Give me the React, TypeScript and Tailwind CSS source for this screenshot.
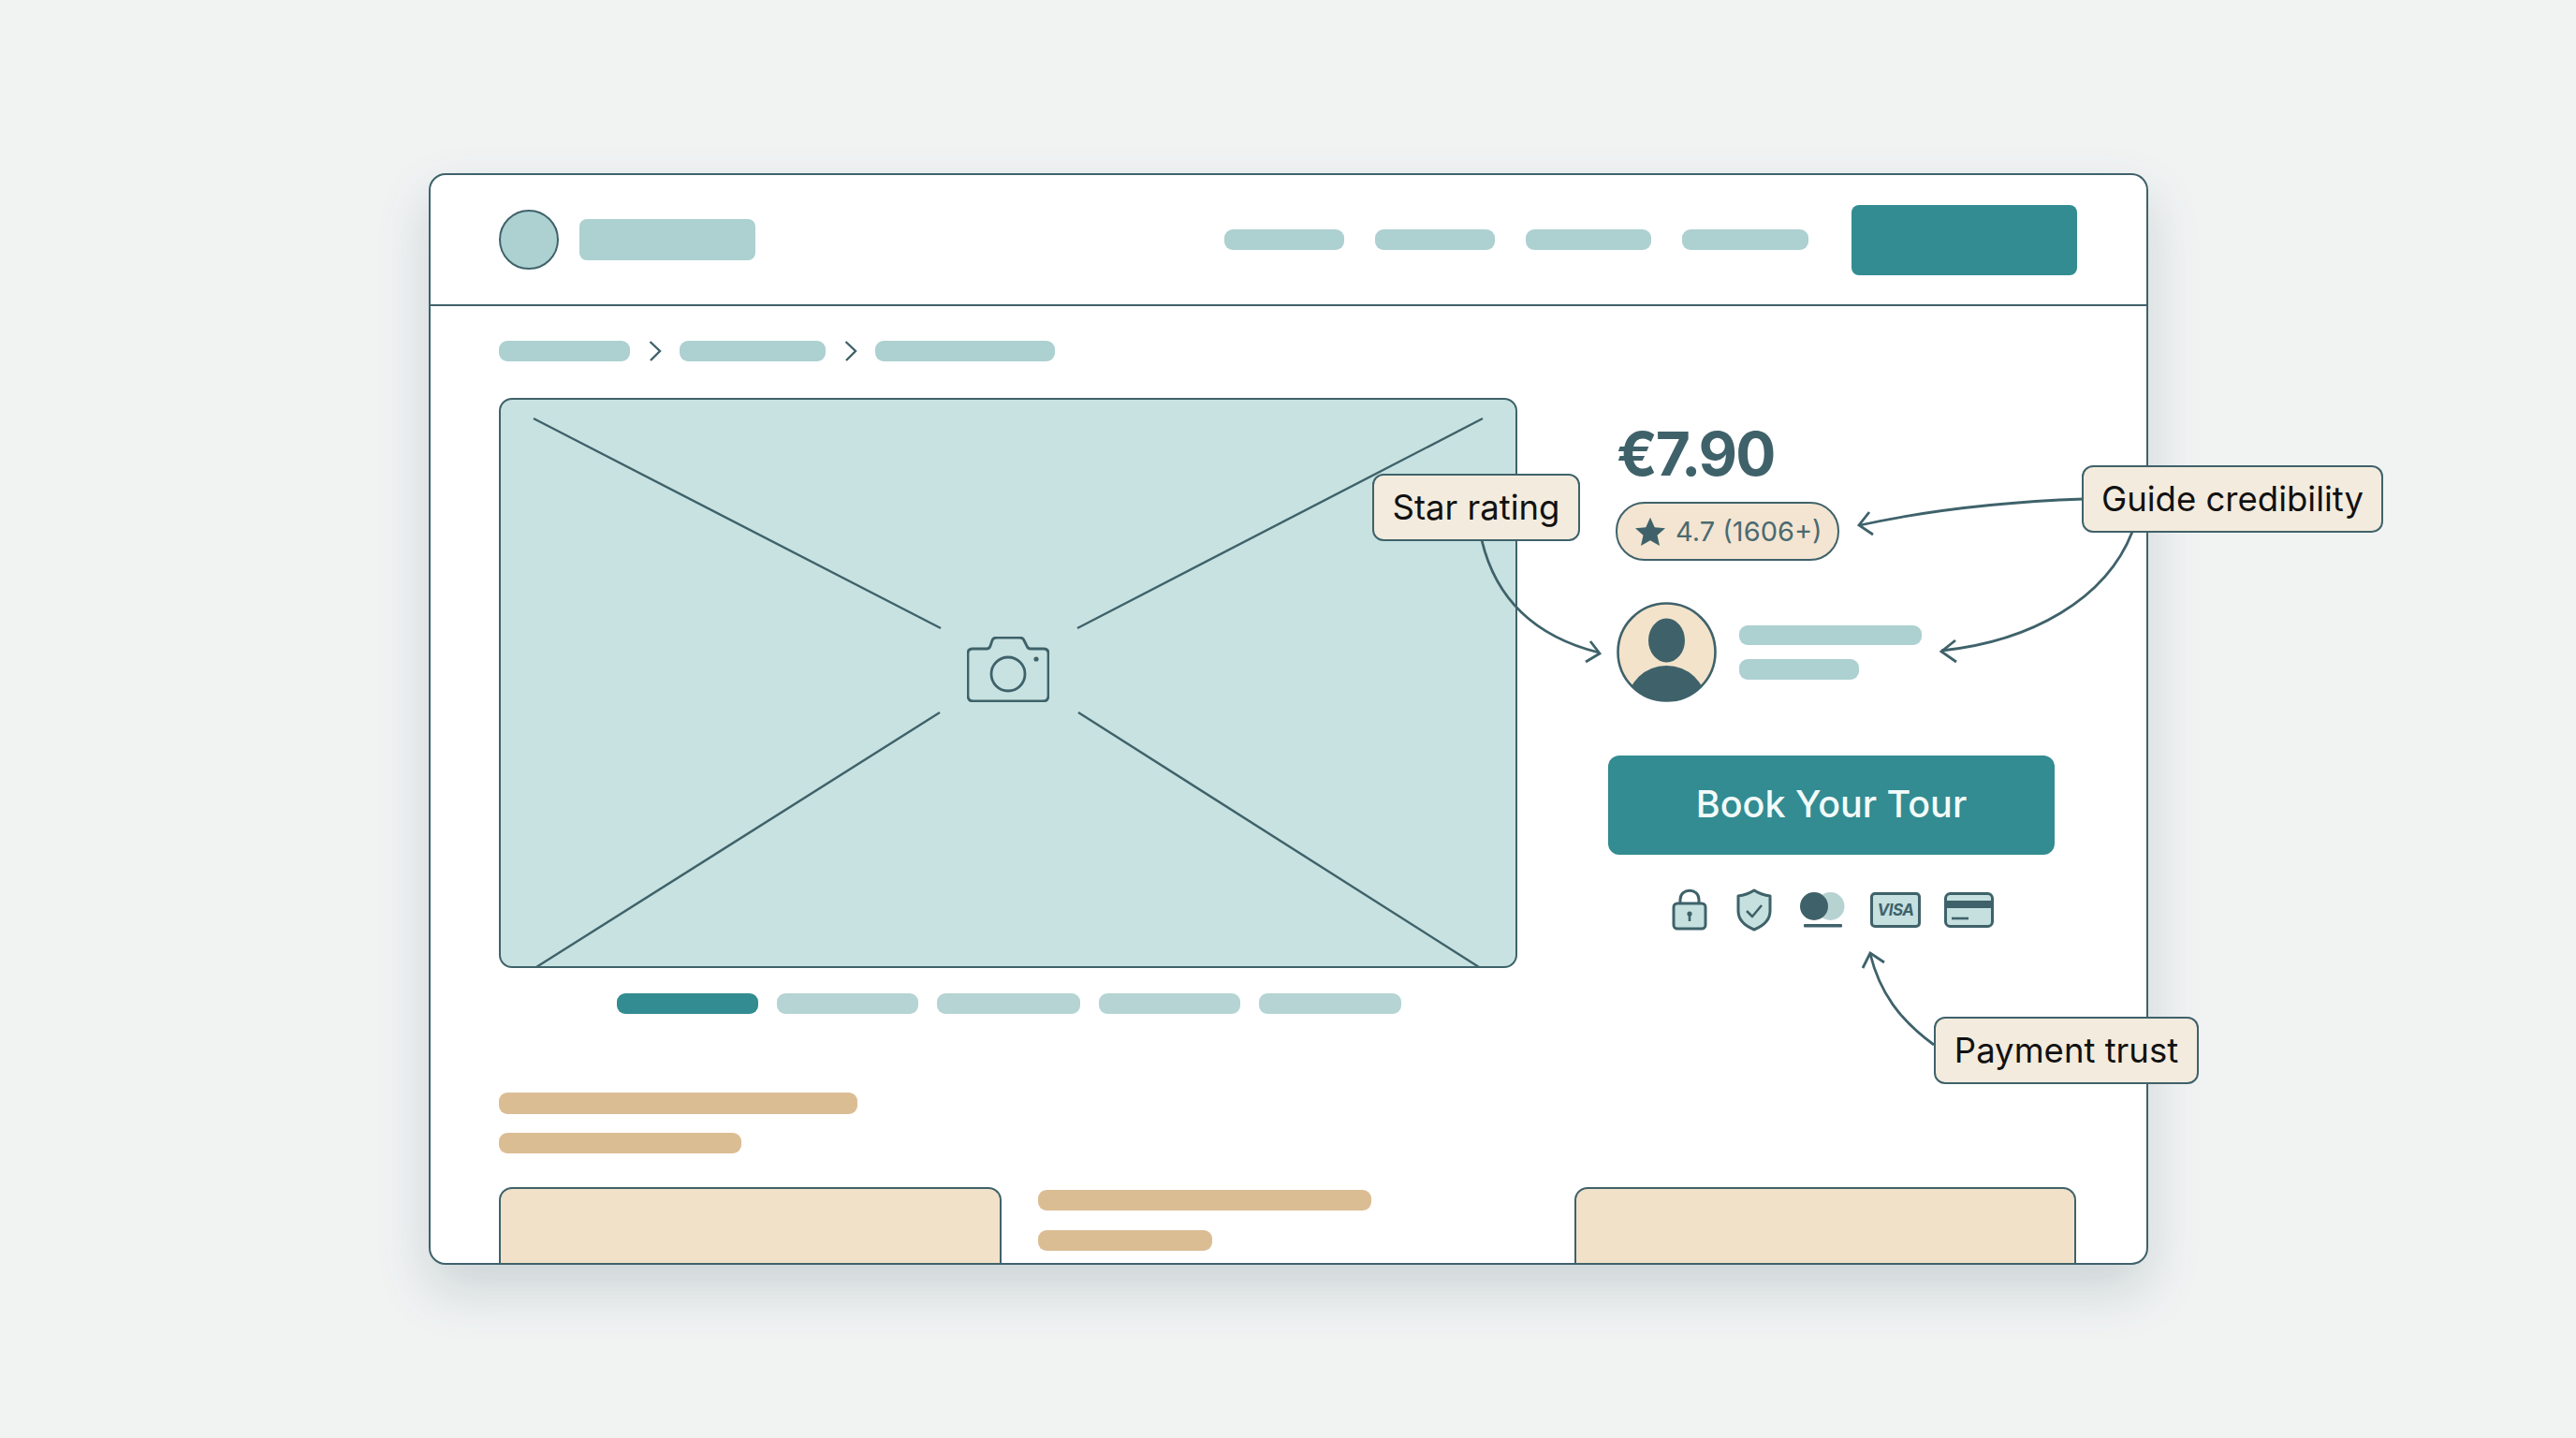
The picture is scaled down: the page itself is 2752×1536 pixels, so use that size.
const Bar = ({ className }: { className: string }) => <div className={`rounded-[9px] ${className}`} />;

const Chevron = () => (
  <svg width="14" height="22" viewBox="0 0 14 22" fill="none" stroke="#3f626a" strokeWidth="2.4">
    <path d="M1.5 1 L12 11 L2 21" />
  </svg>
);

const Camera = () => (
  <svg width="88" height="70" viewBox="0 0 88 70" fill="none" stroke="#3f626a" strokeWidth="2.8" strokeLinejoin="round">
    <path d="M6 13 H21 Q24 13 25 10 L27 4 Q28 1 32 1 H56 Q60 1 61 4 L64 10 Q65 13 68 13 H82 Q87 13 87 18 V63 Q87 69 81 69 H7 Q1 69 1 63 V18 Q1 13 6 13 Z" />
    <circle cx="44" cy="40" r="18" />
    <circle cx="74" cy="24" r="2.6" fill="#3f626a" stroke="none" />
  </svg>
);

const Avatar = () => (
  <svg width="107" height="107" viewBox="0 0 107 107" className="block">
    <defs>
      <clipPath id="avatar-clip">
        <circle cx="53.5" cy="53.5" r="52" />
      </clipPath>
    </defs>
    <circle cx="53.5" cy="53.5" r="52" fill="#f3e3cb" />
    <g clipPath="url(#avatar-clip)" fill="#3f626a">
      <ellipse cx="53.5" cy="41" rx="19.5" ry="23.5" />
      <ellipse cx="53.5" cy="108" rx="42" ry="40" />
    </g>
    <circle cx="53.5" cy="53.5" r="52" fill="none" stroke="#3f626a" strokeWidth="2.6" />
  </svg>
);

const Lock = () => (
  <svg width="38" height="46" viewBox="0 0 38 46" fill="none" stroke="#3f626a" strokeWidth="3">
    <path d="M9 17 V12 C9 -1 29 -1 29 12 V17" />
    <rect x="2" y="16" width="34" height="27" rx="4" fill="#c5e0df" />
    <circle cx="19" cy="27" r="2.6" fill="#3f626a" stroke="none" />
    <path d="M19 27 V35" strokeWidth="2.6" />
  </svg>
);

const Shield = () => (
  <svg width="38" height="46" viewBox="0 0 38 46" fill="none" stroke="#3f626a" strokeWidth="3" strokeLinejoin="round">
    <path d="M19 2 Q27 7 36 8 V24 Q36 37 19 44 Q2 37 2 24 V8 Q11 7 19 2 Z" fill="#c5e0df" />
    <path d="M11 24 L17 30 L27 18" strokeWidth="2.6" />
  </svg>
);

const Circles = () => (
  <svg width="48" height="38" viewBox="0 0 48 38">
    <circle cx="32.5" cy="15" r="15" fill="#b6d3d2" />
    <circle cx="15" cy="15" r="15" fill="#3f626a" />
    <rect x="4" y="34" width="41" height="3.5" rx="1" fill="#3f626a" />
  </svg>
);

const Card = () => (
  <svg width="53" height="38" viewBox="0 0 53 38" fill="none" stroke="#3f626a" strokeWidth="3">
    <rect x="1.5" y="1.5" width="50" height="35" rx="5" fill="#c5e0df" />
    <rect x="1.5" y="9" width="50" height="8" fill="#3f626a" stroke="none" />
    <path d="M8 28 H26" strokeWidth="2.6" />
  </svg>
);

const Annotation = ({ className, children }: { className: string; children: string }) => (
  <div
    className={`absolute flex items-center justify-center h-[72px] rounded-[12px] border-2 border-[#3f626a] bg-[#f3ebdd] text-[36.5px] text-[#111111] whitespace-nowrap font-['Inter',sans-serif] ${className}`}
  >
    {children}
  </div>
);

const Arrows = () => (
  <svg width="2752" height="1536" viewBox="0 0 2752 1536" fill="none" stroke="#3f626a" strokeWidth="2.8" className="absolute left-0 top-0 pointer-events-none">
    <path d="M2226 533 C2140 536 2060 545 1987 561" />
    <path d="M1997 547 L1986 561 L2001 571" />
    <path d="M2278 568 C2250 640 2170 685 2074 695" />
    <path d="M2089 684 L2074 696 L2090 707" />
    <path d="M1583 577 C1598 640 1640 680 1708 697" />
    <path d="M1699 685 L1709 698 L1694 707" />
    <path d="M2066 1116 C2030 1090 2008 1060 1998 1019" />
    <path d="M1990 1034 L1998 1018 L2013 1028" />
  </svg>
);

export default function App() {
  return (
    <div className="relative w-[2752px] h-[1536px] overflow-hidden bg-[#f1f3f3] pl-[458px] pt-[185px] font-['Inter',sans-serif]">
      <div className="w-[1837px] h-[1166px] overflow-hidden rounded-[18px] border-2 border-[#3f626a] bg-white shadow-[0_26px_56px_rgba(60,90,100,0.2)]">
        <header className="flex h-[140px] items-center border-b-2 border-[#3f626a] pl-[73px] pr-[74px]">
          <div className="h-[64px] w-[64px] rounded-full border-2 border-[#3f626a] bg-[#add0d1]" />
          <div className="ml-[22px] h-[44px] w-[188px] rounded-[8px] bg-[#add0d1]" />
          <nav className="ml-auto flex items-center gap-[33px]">
            <Bar className="h-[22px] w-[128px] bg-[#add0d1]" />
            <Bar className="h-[22px] w-[128px] bg-[#add0d1]" />
            <Bar className="h-[22px] w-[134px] bg-[#add0d1]" />
            <Bar className="h-[22px] w-[135px] bg-[#add0d1]" />
          </nav>
          <div className="ml-[46px] h-[75px] w-[241px] rounded-[8px] bg-[#328c92]" />
        </header>

        <div className="pl-[73px] pr-[75px] pt-[37px]">
          <div className="flex items-center">
            <Bar className="h-[22px] w-[140px] bg-[#add0d1]" />
            <div className="ml-[20px] mr-[19px]"><Chevron /></div>
            <Bar className="h-[22px] w-[156px] bg-[#add0d1]" />
            <div className="ml-[20px] mr-[19px]"><Chevron /></div>
            <Bar className="h-[22px] w-[192px] bg-[#add0d1]" />
          </div>

          <div className="mt-[39px] flex items-start">
            <div className="w-[1088px]">
              <div className="relative flex h-[609px] items-center justify-center overflow-hidden rounded-[14px] border-2 border-[#3f626a] bg-[#c8e2e1]">
                <svg width="1088" height="608" viewBox="533 425 1088 608" fill="none" stroke="#3f626a" strokeWidth="2.4" className="absolute -left-[2px] -top-[2px]">
                  <path d="M570 447 L1005 671 M1584 447 L1151 671 M573 1033 L1004 761 M1580 1033 L1152 761" />
                </svg>
                <div className="relative -mt-[30px]"><Camera /></div>
              </div>
              <div className="mt-[27px] flex gap-[20px] pl-[126px]">
                <Bar className="h-[22px] w-[151px] bg-[#328c92]" />
                <Bar className="h-[22px] w-[151px] bg-[#b5d4d3]" />
                <Bar className="h-[22px] w-[153px] bg-[#b5d4d3]" />
                <Bar className="h-[22px] w-[151px] bg-[#b5d4d3]" />
                <Bar className="h-[22px] w-[152px] bg-[#b5d4d3]" />
              </div>
            </div>

            <div className="ml-[97px] flex w-[477px] flex-col">
              <div className="ml-[9px] mt-[28px] text-[64px] font-bold leading-[64px] tracking-[-2px] text-[#3f626a]">€7.90</div>
              <div className="ml-[8px] mt-[19px] flex h-[63px] w-[239px] items-center rounded-[31px] border-2 border-[#3f626a] bg-[#f3e5d1] pl-[18px]">
                <svg width="34" height="32" viewBox="0 0 24 23" fill="#3f626a">
                  <path d="M12 0.5 L15.4 8 L23.5 8.8 L17.4 14.2 L19.2 22.3 L12 18.1 L4.8 22.3 L6.6 14.2 L0.5 8.8 L8.6 8 Z" />
                </svg>
                <span className="ml-[10px] text-[29px] leading-none text-[#4b6a71]">4.7 (1606+)</span>
              </div>
              <div className="ml-[9px] mt-[44px] flex items-center">
                <Avatar />
                <div className="ml-[24px] flex flex-col gap-[15px]">
                  <Bar className="h-[21px] w-[195px] bg-[#add0d1]" />
                  <Bar className="h-[22px] w-[128px] bg-[#add0d1]" />
                </div>
              </div>
              <div className="mt-[57px] flex h-[106px] w-[477px] items-center justify-center rounded-[12px] bg-[#328c92] text-[39.5px] font-medium text-[#f2fbfa]">
                Book Your Tour
              </div>
              <div className="ml-[68px] mt-[36px] flex items-center">
                <Lock />
                <div className="ml-[31px]"><Shield /></div>
                <div className="ml-[30px]"><Circles /></div>
                <div className="ml-[27px] flex h-[38px] w-[54px] items-center justify-center rounded-[5px] border-[3px] border-[#3f626a] bg-[#c5e0df] text-[17px] font-bold italic leading-none tracking-[-0.5px] text-[#3f626a]">VISA</div>
                <div className="ml-[25px]"><Card /></div>
              </div>
            </div>
          </div>

          <div className="mt-[84px] flex w-[600px] flex-col gap-[20px]">
            <Bar className="h-[23px] w-[383px] bg-[#dbbd94]" />
            <Bar className="h-[22px] w-[259px] bg-[#dbbd94]" />
          </div>

          <div className="mt-[36px] flex items-start">
            <div className="h-[90px] w-[537px] rounded-t-[14px] border-x-2 border-t-2 border-[#3f626a] bg-[#f0e1c8]" />
            <div className="ml-[39px] flex flex-col gap-[21px] pt-[3px]">
              <Bar className="h-[22px] w-[356px] bg-[#dbbd94]" />
              <Bar className="h-[22px] w-[186px] bg-[#dbbd94]" />
            </div>
            <div className="ml-auto h-[90px] w-[536px] rounded-t-[14px] border-x-2 border-t-2 border-[#3f626a] bg-[#f0e1c8]" />
          </div>
        </div>
      </div>

      <Arrows />
      <Annotation className="left-[1466px] top-[506px] w-[222px]">Star rating</Annotation>
      <Annotation className="left-[2224px] top-[497px] w-[322px]">Guide credibility</Annotation>
      <Annotation className="left-[2066px] top-[1086px] w-[283px]">Payment trust</Annotation>
    </div>
  );
}
